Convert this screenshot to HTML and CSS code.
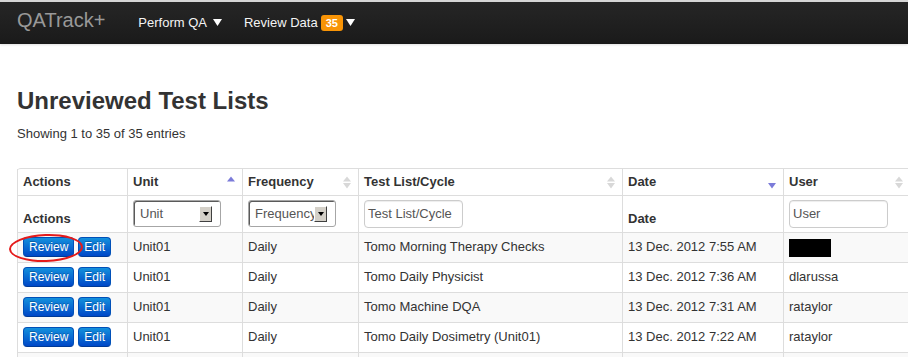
FILE: index.html
```html
<!DOCTYPE html>
<html lang="en">
<head>
    <meta charset="UTF-8">
    <meta name="viewport" content="width=device-width, initial-scale=1.0">
    <title>QATrack+ - Unreviewed Test Lists</title>
    <link rel="stylesheet" href="styles.css">
</head>
<body>
    <div class="navbar">
        <a class="brand" href="#">QATrack+</a>
        <ul class="nav">
            <li class="nav-item">
                <a href="#">Perform QA</a>
                <svg class="caret" width="9" height="8" viewBox="0 0 9 8"><polygon points="0,0 9,0 4.5,7" fill="#fff"/></svg>
            </li>
            <li class="nav-item">
                <a href="#">Review Data</a>
                <span class="badge">35</span>
                <svg class="caret" width="9" height="8" viewBox="0 0 9 8"><polygon points="0,0 9,0 4.5,7" fill="#fff"/></svg>
            </li>
        </ul>
    </div>

    <div class="content">
        <h2>Unreviewed Test Lists</h2>
        <div class="info">Showing 1 to 35 of 35 entries</div>

        <table class="listing">
            <thead>
                <tr>
                    <th class="c-actions"><div class="th-inner">Actions</div></th>
                    <th class="c-unit">
                        <div class="th-inner">Unit
                            <svg class="sort" width="9" height="13" viewBox="0 0 9 13"><polygon points="0,5.5 8,5.5 4,0.5" fill="#7b7bd9"/></svg>
                        </div>
                    </th>
                    <th class="c-freq">
                        <div class="th-inner">Frequency
                            <svg class="sort" width="9" height="13" viewBox="0 0 9 13"><polygon points="0,5.5 8,5.5 4,0.5" fill="#d8d8d8"/><polygon points="0,7 8,7 4,12.5" fill="#d8d8d8"/></svg>
                        </div>
                    </th>
                    <th class="c-list">
                        <div class="th-inner">Test List/Cycle
                            <svg class="sort" width="9" height="13" viewBox="0 0 9 13"><polygon points="0,5.5 8,5.5 4,0.5" fill="#d8d8d8"/><polygon points="0,7 8,7 4,12.5" fill="#d8d8d8"/></svg>
                        </div>
                    </th>
                    <th class="c-date">
                        <div class="th-inner">Date
                            <svg class="sort" width="9" height="13" viewBox="0 0 9 13"><polygon points="0,7 8,7 4,12.5" fill="#7b7bd9"/></svg>
                        </div>
                    </th>
                    <th class="c-user">
                        <div class="th-inner">User
                            <svg class="sort" width="9" height="13" viewBox="0 0 9 13"><polygon points="0,5.5 8,5.5 4,0.5" fill="#d8d8d8"/><polygon points="0,7 8,7 4,12.5" fill="#d8d8d8"/></svg>
                        </div>
                    </th>
                </tr>
                <tr class="filters">
                    <th class="bottom">Actions</th>
                    <th>
                        <div class="select">
                            <span class="select-text">Unit</span>
                            <span class="select-btn"><span class="select-arrow"></span></span>
                        </div>
                    </th>
                    <th>
                        <div class="select">
                            <span class="select-text">Frequency</span>
                            <span class="select-btn"><span class="select-arrow"></span></span>
                        </div>
                    </th>
                    <th><div class="filter-input">Test List/Cycle</div></th>
                    <th class="bottom">Date</th>
                    <th><div class="filter-input">User</div></th>
                </tr>
            </thead>
            <tbody>
                <tr>
                    <td>
                        <div class="btns">
                            <span class="marked">
                                <a class="btn" href="#">Review</a>
                                <span class="circle"></span>
                            </span>
                            <a class="btn" href="#">Edit</a>
                        </div>
                    </td>
                    <td>Unit01</td>
                    <td>Daily</td>
                    <td>Tomo Morning Therapy Checks</td>
                    <td>13 Dec. 2012 7:55 AM</td>
                    <td><span class="redacted"></span></td>
                </tr>
                <tr>
                    <td><div class="btns"><a class="btn" href="#">Review</a><a class="btn" href="#">Edit</a></div></td>
                    <td>Unit01</td>
                    <td>Daily</td>
                    <td>Tomo Daily Physicist</td>
                    <td>13 Dec. 2012 7:36 AM</td>
                    <td>dlarussa</td>
                </tr>
                <tr>
                    <td><div class="btns"><a class="btn" href="#">Review</a><a class="btn" href="#">Edit</a></div></td>
                    <td>Unit01</td>
                    <td>Daily</td>
                    <td>Tomo Machine DQA</td>
                    <td>13 Dec. 2012 7:31 AM</td>
                    <td>rataylor</td>
                </tr>
                <tr>
                    <td><div class="btns"><a class="btn" href="#">Review</a><a class="btn" href="#">Edit</a></div></td>
                    <td>Unit01</td>
                    <td>Daily</td>
                    <td>Tomo Daily Dosimetry (Unit01)</td>
                    <td>13 Dec. 2012 7:22 AM</td>
                    <td>rataylor</td>
                </tr>
                <tr class="empty">
                    <td></td>
                    <td></td>
                    <td></td>
                    <td></td>
                    <td></td>
                    <td></td>
                </tr>
            </tbody>
        </table>
    </div>
</body>
</html>
```

FILE: styles.css
```css
body {
    margin: 0;
    font-family: "Liberation Sans", Arial, sans-serif;
    font-size: 13px;
    line-height: 18px;
    color: #333;
    background: #fff;
    overflow: hidden;
}

a {
    text-decoration: none;
}

/* top bar */

.navbar {
    display: flex;
    align-items: center;
    height: 42px;
    padding-left: 17px;
    border-top: 2px solid #d6d6d6;
    background: linear-gradient(to bottom, #262626, #1a1a1a);
    box-shadow: 0 1px 2px rgba(0, 0, 0, 0.12);
}

.brand {
    font-size: 20px;
    line-height: 24px;
    color: #999;
    padding-bottom: 6px;
    margin-right: 33px;
}

.nav {
    display: flex;
    margin: 0;
    padding: 0;
    list-style: none;
}

.nav-item {
    display: flex;
    align-items: center;
    margin-right: 22px;
    padding-bottom: 1px;
}

.nav-item a {
    color: #f4f4f4;
    line-height: 20px;
}

.caret {
    margin-left: 6px;
    margin-top: 1px;
}

.badge {
    margin-left: 3px;
    padding: 0 5px;
    height: 16px;
    line-height: 16px;
    font-size: 11px;
    font-weight: bold;
    color: #fff;
    background: #f89406;
    border-radius: 3px;
}

.badge + .caret {
    margin-left: 3px;
}

/* page */

.content {
    padding-left: 17px;
}

h2 {
    margin: 42px 0 0;
    font-size: 24px;
    line-height: 30px;
    font-weight: bold;
}

.info {
    margin-top: 9px;
    margin-bottom: 25px;
}

/* table */

.listing {
    table-layout: fixed;
    width: 894px;
    border-collapse: separate;
    border-spacing: 0;
    border: 1px solid #ddd;
    border-left: 0;
    border-radius: 4px 0 0 0;
}

.listing th,
.listing td {
    box-sizing: border-box;
    padding: 4px 5px;
    border-left: 1px solid #ddd;
    border-top: 1px solid #ddd;
    text-align: left;
    vertical-align: top;
}

.listing thead tr:first-child th {
    border-top: 0;
}

.listing th {
    font-weight: bold;
    line-height: 18px;
}

.c-actions { width: 110px; }
.c-unit { width: 115px; }
.c-freq { width: 116px; }
.c-list { width: 264px; }
.c-date { width: 161px; }
.c-user { width: 127px; }

.th-inner {
    display: flex;
    justify-content: space-between;
    align-items: center;
}

.sort {
    margin-right: 1px;
    margin-top: 1px;
}

.filters th.bottom {
    vertical-align: bottom;
}

.select {
    display: flex;
    align-items: center;
    box-sizing: border-box;
    width: 88px;
    height: 27px;
    border: 1px solid #a6a6a6;
    border-radius: 3px;
    box-shadow: inset 1px 1px 0 #5a5a5a;
    background: #fff;
    font-weight: normal;
    color: #555;
    overflow: hidden;
}

.select-text {
    flex: 1;
    padding-left: 6px;
    white-space: nowrap;
    overflow: hidden;
}

.select-btn {
    display: flex;
    align-items: center;
    justify-content: center;
    box-sizing: border-box;
    width: 13px;
    height: 16px;
    margin-right: 8px;
    background: #d4d0c8;
    border: 1px solid;
    border-color: #fff #404040 #404040 #fff;
}

.select-arrow {
    width: 0;
    height: 0;
    border-left: 3.5px solid transparent;
    border-right: 3.5px solid transparent;
    border-top: 4px solid #000;
}

.filter-input {
    box-sizing: border-box;
    width: 99px;
    height: 28px;
    padding: 0 3px;
    line-height: 26px;
    border: 1px solid #ccc;
    border-radius: 4px;
    box-shadow: inset 0 1px 1px rgba(0, 0, 0, 0.075);
    font-weight: normal;
    color: #555;
    white-space: nowrap;
}

.listing td {
    padding-bottom: 5px;
    line-height: 20px;
}

.listing tbody tr:nth-child(odd) td {
    background: #f9f9f9;
}

.listing tr.empty td {
    height: 30px;
}

.btns {
    display: flex;
    gap: 4px;
}

.btn {
    display: inline-block;
    height: 20px;
    box-sizing: border-box;
    padding: 0 5px;
    font-size: 12px;
    line-height: 18px;
    color: #fff;
    text-shadow: 0 -1px 0 rgba(0, 0, 0, 0.25);
    background: linear-gradient(to bottom, #1490dc, #0048c8);
    border: 1px solid #0050b8;
    border-bottom-color: #003a96;
    border-radius: 4px;
}

.marked {
    position: relative;
    display: flex;
}

.circle {
    position: absolute;
    left: -14px;
    top: -3px;
    width: 74px;
    height: 28px;
    box-sizing: border-box;
    border: 2px solid #e41b1b;
    border-radius: 50%;
    transform: rotate(-2deg);
}

.redacted {
    display: block;
    width: 42px;
    height: 18px;
    margin-top: 2px;
    background: #000;
}
```
